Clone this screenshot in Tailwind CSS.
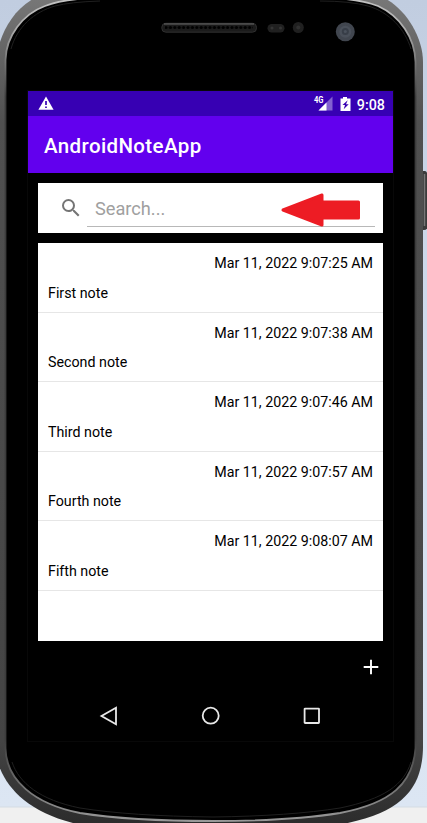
<!DOCTYPE html>
<html lang="en">
<head>
<meta charset="utf-8">
<title>AndroidNoteApp</title>
<script src="https://cdn.jsdelivr.net/npm/@tailwindcss/browser@4"></script>
</head>
<body class="w-[427px] h-[823px] overflow-hidden relative bg-[#d9e3f0] font-['Roboto',sans-serif]">
<!-- device shell -->
<svg class="absolute inset-0" width="427" height="823" viewBox="0 0 427 823" fill="none">
  <defs>
    <linearGradient id="bg" x1="0" y1="0" x2="0" y2="1"><stop offset="0" stop-color="#c1cde0"/><stop offset=".5" stop-color="#d3deee"/><stop offset="1" stop-color="#dce6f3"/></linearGradient>
    <linearGradient id="rim" x1="0" y1="0" x2="0" y2="1"><stop offset="0" stop-color="#777"/><stop offset=".06" stop-color="#666"/><stop offset=".15" stop-color="#505050"/><stop offset=".9" stop-color="#444"/><stop offset="1" stop-color="#2c2c2c"/></linearGradient>
    <linearGradient id="hi" x1="0" y1="0" x2="0" y2="1"><stop offset="0" stop-color="#c4c4c4"/><stop offset=".04" stop-color="#aaa"/><stop offset=".12" stop-color="#3c3c3c"/><stop offset=".9" stop-color="#3c3c3c"/><stop offset="1" stop-color="#999"/></linearGradient>
    <pattern id="mesh" x="164" y="25" width="4.4" height="5" patternUnits="userSpaceOnUse"><circle cx="2" cy="2.5" r="1.6" fill="#000"/></pattern>
  </defs>
  <rect width="427" height="807" fill="url(#bg)"/>
  <rect y="807" width="427" height="16" fill="#f0f0f0"/>
  <rect y="806.500" width="427" height="1" fill="#d4dbe4"/>
  <path d="M421 171h4q3 1 3 6v47q0 6-4 6h-3z" fill="#3b3b3b"/>
  <path d="M424.500 174v52" stroke="#777" stroke-width="1.500"/>
  <path d="M-1 45C4 28 15 9 33 -1H386C406 10 423 37 423 62V748C422 787 404 812 343 824H77C30 813 8 790 -1 766Z" fill="url(#rim)"/>
  <path d="M5.500 60C6 36 23 14 45 6Q60 0 90 -2H330Q360 -1 378 6C400 16 415 38 415.500 62V748C413 783 392 803 340 813Q290 821 213 821Q130 821 80 813C34 804 6 780 5.500 748Z" fill="#000" stroke="url(#hi)" stroke-width="1.800"/>
  <path d="M11 49C17 27 34 12 55 6Q70 2 100 1M320 1Q350 1 368 6C389 12 405 29 411 49M411 762C404 785 384 799 340 808Q290 816 213 817Q130 816 80 808C40 800 19 783 12 762" stroke="#202020" stroke-width="1"/>
  <rect x="161.800" y="23.300" width="94.700" height="8.900" rx="4" fill="#1b1b1b" stroke="#303030" stroke-width="1"/>
  <path d="M164 24h90" stroke="#686868" stroke-width="1"/>
  <rect x="165" y="25" width="88" height="5" fill="url(#mesh)"/>
  <rect x="267.500" y="24" width="17" height="8.500" rx="4.200" fill="#202020"/>
  <circle cx="272" cy="28" r="1.500" fill="#343434"/><circle cx="280.500" cy="28" r="1.500" fill="#343434"/>
  <circle cx="298.300" cy="27.500" r="5.500" fill="#202020"/><circle cx="298.300" cy="27.500" r="2" fill="#303030"/>
  <circle cx="345.300" cy="31.800" r="9.500" fill="#41464f"/><circle cx="345.300" cy="31.800" r="6" fill="#4a505a"/><circle cx="345.300" cy="31.500" r="3.500" fill="#383e48"/><circle cx="345.300" cy="31.500" r="1.500" fill="#4b525d"/>
</svg>

<main class="relative mt-[91px] ml-[28px] w-[365px] h-[650px] flex flex-col bg-black shadow-[0_0_0_1px_#080808]">
  <div class="h-[25px] shrink-0 bg-[#3700b3] flex items-center justify-between pl-[10px] pr-[8px] text-white">
    <svg width="16" height="15" viewBox="0 0 16 15"><path d="M8 .5L15.600 13.700H.4Z" fill="#fff"/><path d="M8 5v4M8 10.400v1.600" stroke="#3700b3" stroke-width="1.700"/></svg>
    <div class="flex items-center">
      <svg width="20" height="17" viewBox="0 0 20 17"><path d="M19.500 1.500V15.500H5.500Z" fill="#8260d0"/><path d="M13.500 7.500V15.500H5.500Z" fill="#fff"/><text x="1" y="8" font-family="Roboto" font-size="8.500" font-weight="700" fill="#fff" textLength="9.500" lengthAdjust="spacingAndGlyphs">4G</text></svg>
      <svg class="ml-[7px]" width="11" height="16" viewBox="0 0 11 16"><path d="M3 1h4v1.500h3.500V15H.5V2.500H3Z" fill="#fff"/><path d="M7.700 4.300L2.500 9.100H5L3.700 13.300L8.700 8.300H6Z" fill="#3700b3"/></svg>
      <span class="ml-[6px] text-[14.300px] leading-[20px] font-medium relative top-px">9:08</span>
    </div>
  </div>
  <header class="h-[57px] shrink-0 bg-[#6200ee] flex items-center pl-[16px] pt-[2px]">
    <h1 class="text-[20.500px] leading-6 font-medium tracking-[.38px] text-white">AndroidNoteApp</h1>
  </header>
  <section class="mt-[10px] mx-[10px] h-[50px] shrink-0 bg-white flex pl-[20px] pr-[8px]">
    <svg class="mt-[13px] shrink-0 relative left-[.5px]" width="24" height="24" viewBox="0 0 24 24" fill="#757575"><path d="M15.500 14h-.79l-.28-.27A6.470 6.470 0 0 0 16 9.500 6.500 6.500 0 1 0 9.500 16c1.610 0 3.090-.59 4.230-1.570l.27.28v.79l5 4.990L20.490 19zm-6 0a4.500 4.500 0 1 1 0-9 4.500 4.500 0 0 1 0 9z"/></svg>
    <div class="ml-[5px] flex-1 h-[44px] border-b border-[#b8b8b8] pl-[8px] pr-[15px] flex items-center justify-between">
      <span class="text-[18.200px] leading-6 text-[#a0a0a0] pt-[8px]">Search...</span>
      <svg class="mt-[10px]" width="80" height="34" viewBox="0 0 80 34"><path d="M3 17L42 2V9H78.500V25H42V32Z" fill="#ed1c24" stroke="#ed1c24" stroke-width="3" stroke-linejoin="round"/></svg>
    </div>
  </section>
  <section class="mt-[10px] mx-[10px] h-[398px] shrink-0 bg-white text-black text-[14.250px] leading-[20px]">
    <article class="h-[69.500px] border-b border-[#e6e6e6] pt-[10px] px-[10px]"><p class="text-right">Mar 11, 2022 9:07:25 AM</p><p class="mt-[9.500px]">First note</p></article>
    <article class="h-[69.500px] border-b border-[#e6e6e6] pt-[10px] px-[10px]"><p class="text-right">Mar 11, 2022 9:07:38 AM</p><p class="mt-[9.500px]">Second note</p></article>
    <article class="h-[69.500px] border-b border-[#e6e6e6] pt-[10px] px-[10px]"><p class="text-right">Mar 11, 2022 9:07:46 AM</p><p class="mt-[9.500px]">Third note</p></article>
    <article class="h-[69.500px] border-b border-[#e6e6e6] pt-[10px] px-[10px]"><p class="text-right">Mar 11, 2022 9:07:57 AM</p><p class="mt-[9.500px]">Fourth note</p></article>
    <article class="h-[69.500px] border-b border-[#e6e6e6] pt-[10px] px-[10px]"><p class="text-right">Mar 11, 2022 9:08:07 AM</p><p class="mt-[9.500px]">Fifth note</p></article>
  </section>
  <div class="h-[51px] shrink-0 flex justify-end items-center pr-[14px]">
    <svg width="16" height="16" viewBox="0 0 16 16"><path d="M8 .7V15.300M.7 8H15.300" stroke="#fff" stroke-width="1.900"/></svg>
  </div>
  <nav class="h-[48px] flex items-center justify-between px-[71px]">
    <svg width="20" height="22" viewBox="0 0 20 22" fill="none"><path d="M17 2.800V19.200L2.500 11Z" stroke="#e8e8e8" stroke-width="1.800"/></svg>
    <svg width="20" height="20" viewBox="0 0 20 20" fill="none"><circle cx="9.700" cy="9.700" r="8" stroke="#e8e8e8" stroke-width="1.800"/></svg>
    <svg width="20" height="20" viewBox="0 0 20 20" fill="none"><rect x="2.600" y="2.600" width="14.400" height="14.400" rx=".5" stroke="#e8e8e8" stroke-width="1.800"/></svg>
  </nav>
</main>
</body>
</html>
